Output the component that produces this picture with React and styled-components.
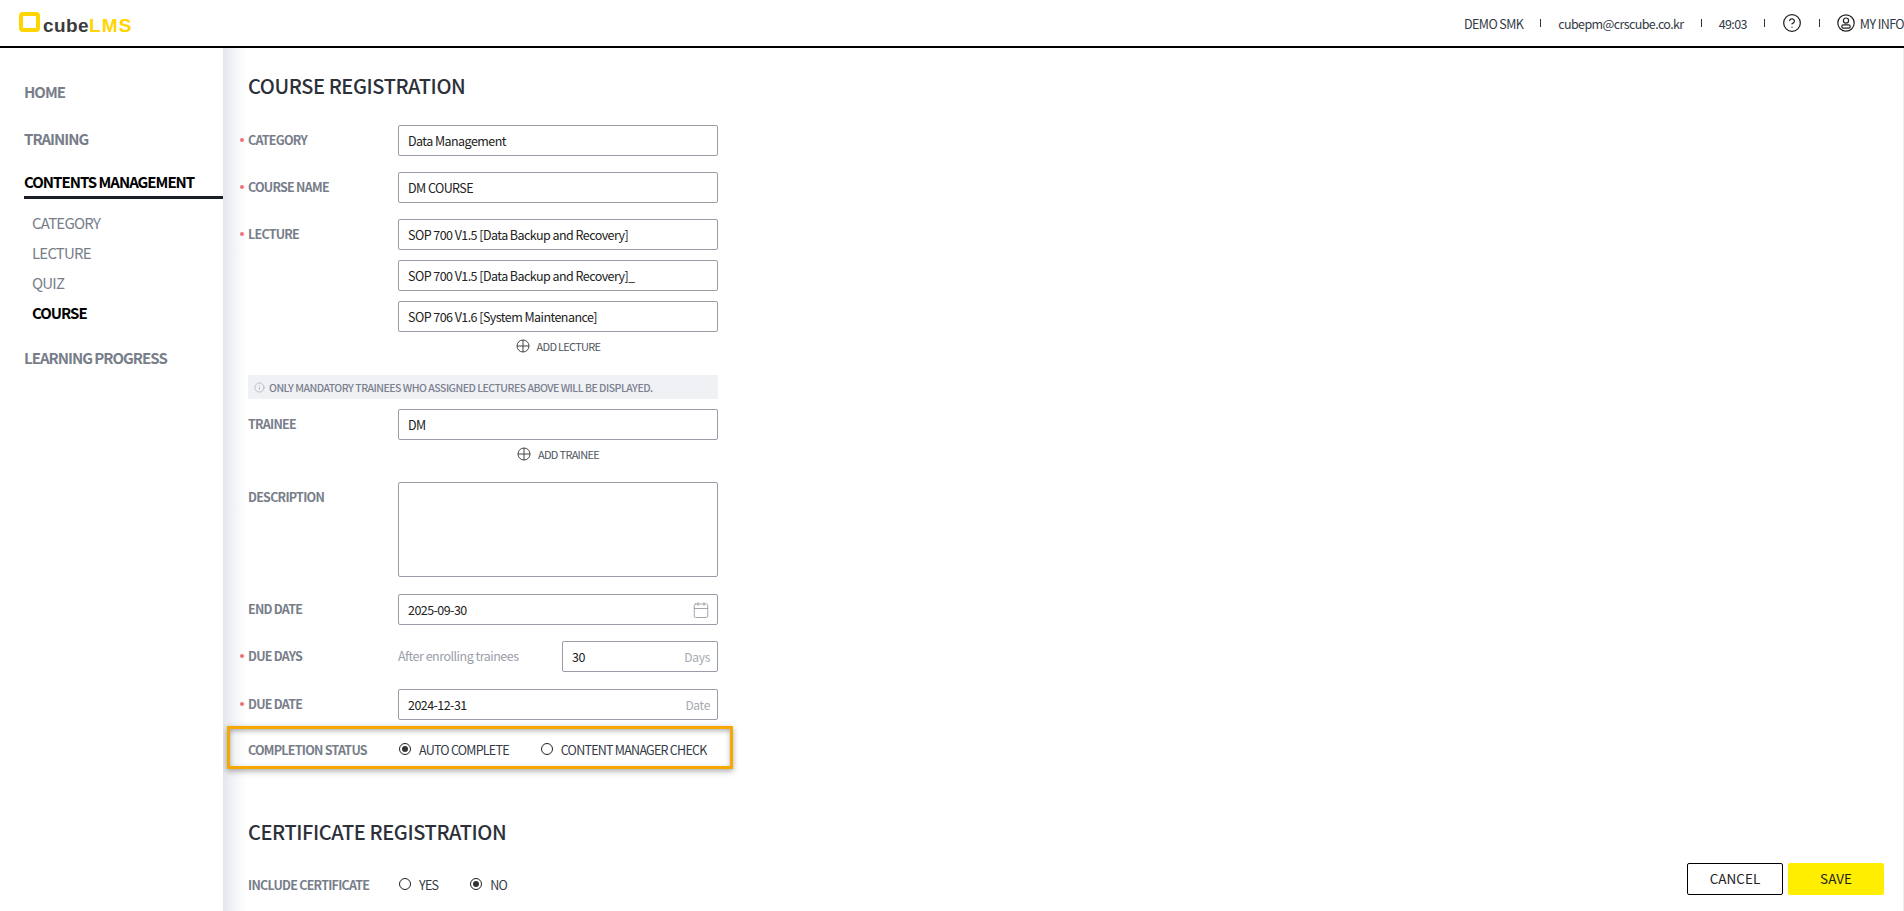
import React from 'react';
import styled, { createGlobalStyle } from 'styled-components';
import { Calendar, CircleHelp, Info } from 'lucide-react';

const GlobalStyle = createGlobalStyle`
   html, body {
      margin: 0;
      height: 100%;
      overflow: hidden;
      background: #fff;
      font-family: "Noto Sans CJK KR", "Noto Sans", sans-serif;
   }
   * {
      box-sizing: border-box;
   }
`;

const Page = styled.div`
   display: flex;
   flex-direction: column;
   height: 911px;
   position: relative;
   overflow: hidden;
`;

/* header */
const Header = styled.header`
   display: flex;
   align-items: center;
   justify-content: space-between;
   flex: none;
   height: 48px;
   padding: 0 0 0 19px;
   border-bottom: 2px solid #000;
`;

const Logo = styled.div`
   display: flex;
   align-items: center;
   font-family: "Liberation Sans", Arial, sans-serif;
   font-weight: 700;
   font-size: 19px;
   line-height: 20px;
`;

const LogoMark = styled.span`
   width: 21px;
   height: 20px;
   margin: -2px 3px 0 0;
   border: 4px solid #ffd500;
   border-radius: 4px;
`;

const LogoCube = styled.span`
   margin-top: 6px;
   color: #3c3c3c;
   letter-spacing: 0.4px;
`;

const LogoLms = styled.span`
   margin-top: 6px;
   color: #ffd500;
   letter-spacing: 1.2px;
`;

const UserBar = styled.div`
   display: flex;
   align-items: center;
   font-size: 12.5px;
   letter-spacing: -0.6px;
   color: #333a45;
   white-space: nowrap;
`;

const UserIconWrap = styled.span`
   display: flex;
   margin-right: 5px;
`;

const Sep = styled.i`
   width: 1px;
   height: 8px;
   margin: 0 17px;
   background: #333;
`;

/* sidebar */
const Body = styled.div`
   display: flex;
   flex: 1;
   min-height: 0;
`;

const Sidebar = styled.nav`
   flex: none;
   width: 223px;
   padding: 32px 0 0 24px;
`;

const NavItem = styled.div`
   height: ${p => p.$h || 47}px;
   font-size: 15px;
   font-weight: 700;
   line-height: 24px;
   letter-spacing: -1px;
   color: #777e8a;
`;

const NavActive = styled.div`
   height: 31px;
   border-bottom: 3px solid #1a1e26;
   font-size: 15px;
   font-weight: 700;
   line-height: 28px;
   letter-spacing: -1px;
   color: #000;
`;

const SubNav = styled.div`
   display: flex;
   flex-direction: column;
   padding: 9px 0 0 8px;
   margin-bottom: 18px;
`;

const SubItem = styled.div`
   height: 30px;
   font-size: 15px;
   font-weight: ${p => (p.$active ? 700 : 400)};
   line-height: 30px;
   letter-spacing: ${p => (p.$active ? -1 : -0.8)}px;
   color: ${p => (p.$active ? '#000' : '#777e8a')};
`;

/* main form */
const Main = styled.main`
   flex: 1;
   padding: 24px 0 0 25px;
   overflow: hidden;
   border-right: 1px solid #eee;
   background: linear-gradient(to right, #e3e6eb, #f6f7f9 14px, #fff 24px);
`;

const Title = styled.h2`
   margin: 0 0 ${p => p.$gap}px;
   font-size: 20px;
   font-weight: 500;
   line-height: 28px;
   letter-spacing: -0.4px;
   color: #2c3038;
`;

const Form = styled.div`
   width: 470px;
`;

const Row = styled.div`
   display: flex;
   position: relative;
   margin-bottom: ${p => p.$gap ?? 16}px;
`;

const Label = styled.div`
   flex: none;
   position: relative;
   width: 150px;
   font-size: 12.5px;
   font-weight: 700;
   line-height: 30px;
   letter-spacing: -0.75px;
   color: #777e8a;

   ${p =>
      p.$required &&
      `&::before {
         content: '';
         position: absolute;
         left: -8px;
         top: 13px;
         width: 4px;
         height: 4px;
         border-radius: 50%;
         background: #f0707a;
      }`}
`;

const Stack = styled.div`
   display: flex;
   flex-direction: column;
   flex: 1;
   gap: ${p => p.$gap ?? 10}px;
   min-width: 0;
`;

const Field = styled.div`
   display: flex;
   align-items: center;
   justify-content: space-between;
   flex: ${p => (p.$w ? 'none' : '1 1 auto')};
   width: ${p => (p.$w ? `${p.$w}px` : 'auto')};
   height: ${p => p.$h || 31}px;
   padding: 0 7px 0 9px;
   border: 1px solid #999da5;
   border-radius: 2px;
   background: #fff;
   font-size: 12.5px;
   letter-spacing: -0.55px;
   color: #222;
`;

const Unit = styled.span`
   font-size: 12px;
   letter-spacing: -0.3px;
   color: #a5a9b1;
`;

const Hint = styled.div`
   flex: 1;
   font-size: 12.5px;
   line-height: 30px;
   letter-spacing: -0.5px;
   color: #9a9ea8;
`;

const AddRow = styled.div`
   display: flex;
   align-items: center;
   justify-content: center;
   gap: 7px;
   height: 27px;
   font-size: 11px;
   letter-spacing: -0.7px;
   color: #4d5361;
`;

const Notice = styled.div`
   display: flex;
   align-items: center;
   gap: 4px;
   height: 24px;
   margin-bottom: 10px;
   padding-left: 6px;
   background: #f0f1f5;
   font-size: 10.5px;
   font-weight: 500;
   letter-spacing: -0.5px;
   color: #7a808e;
   svg {
      color: #a5a9b1;
   }
`;

const Radios = styled.div`
   display: flex;
   flex: 1;
   align-items: center;
   gap: ${p => p.$gap}px;
   height: 28px;
   padding-left: 1px;
`;

const RadioItem = styled.label`
   display: flex;
   align-items: center;
   gap: 8px;
   font-size: 12.5px;
   letter-spacing: -0.75px;
   color: #333a45;
   white-space: nowrap;
`;

const RadioDot = styled.span`
   display: flex;
   align-items: center;
   justify-content: center;
   width: 12px;
   height: 12px;
   border: 1px solid #222;
   border-radius: 50%;
   background: #fff;

   &::after {
      content: '';
      display: ${p => (p.$on ? 'block' : 'none')};
      width: 6px;
      height: 6px;
      border-radius: 50%;
      background: #333;
   }
`;

const Highlight = styled.div`
   position: absolute;
   left: -21px;
   right: -15px;
   top: -9px;
   bottom: -4px;
   border: 3px solid #f7a800;
   box-shadow: 0 2px 6px rgba(0, 0, 0, 0.35), inset 0 2px 5px rgba(0, 0, 0, 0.3);
   pointer-events: none;
`;

const Actions = styled.div`
   display: flex;
   gap: 5px;
   position: absolute;
   right: 20px;
   bottom: 16px;
`;

const Button = styled.button`
   width: 96px;
   height: 32px;
   padding: 0 0 2px;
   border: ${p => (p.$primary ? 'none' : '1.5px solid #000')};
   border-radius: 2px;
   background: ${p => (p.$primary ? '#ffee00' : '#fff')};
   font-family: inherit;
   font-size: 13.5px;
   color: #222;
`;

const PlusIcon = () => (
   <svg width="14" height="14" viewBox="0 0 14 14" fill="none" stroke="#444" strokeWidth="1">
      <circle cx="7" cy="7" r="6" />
      <path d="M7 1v12M1 7h12" />
   </svg>
);

const UserIcon = () => (
   <svg width="18" height="18" viewBox="0 0 18 18" fill="none" stroke="#222" strokeWidth="1.2">
      <circle cx="9" cy="9" r="8.2" />
      <circle cx="9" cy="6.6" r="2.6" />
      <rect x="4.8" y="10.8" width="8.4" height="3.4" rx="1.6" />
   </svg>
);

const Radio = ({ on, children }) => (
   <RadioItem>
      <RadioDot $on={on} />
      {children}
   </RadioItem>
);

const App = () => (
   <Page>
      <GlobalStyle />
      <Header>
         <Logo>
            <LogoMark />
            <LogoCube>cube</LogoCube>
            <LogoLms>LMS</LogoLms>
         </Logo>
         <UserBar>
            <span>DEMO SMK</span>
            <Sep />
            <span>cubepm@crscube.co.kr</span>
            <Sep />
            <span>49:03</span>
            <Sep />
            <CircleHelp size={20} strokeWidth={1.5} color="#222" />
            <Sep />
            <UserIconWrap>
               <UserIcon />
            </UserIconWrap>
            <span>MY INFO</span>
         </UserBar>
      </Header>
      <Body>
         <Sidebar>
            <NavItem>HOME</NavItem>
            <NavItem $h={41}>TRAINING</NavItem>
            <NavActive>CONTENTS MANAGEMENT</NavActive>
            <SubNav>
               <SubItem>CATEGORY</SubItem>
               <SubItem>LECTURE</SubItem>
               <SubItem>QUIZ</SubItem>
               <SubItem $active>COURSE</SubItem>
            </SubNav>
            <NavItem>LEARNING PROGRESS</NavItem>
         </Sidebar>
         <Main>
            <Title $gap={25}>COURSE REGISTRATION</Title>
            <Form>
               <Row>
                  <Label $required>CATEGORY</Label>
                  <Field>Data Management</Field>
               </Row>
               <Row>
                  <Label $required>COURSE NAME</Label>
                  <Field>DM COURSE</Field>
               </Row>
               <Row $gap={16}>
                  <Label $required>LECTURE</Label>
                  <Stack $gap={0}>
                     <Stack>
                        <Field>SOP 700 V1.5 [Data Backup and Recovery]</Field>
                        <Field>SOP 700 V1.5 [Data Backup and Recovery]_</Field>
                        <Field>SOP 706 V1.6 [System Maintenance]</Field>
                     </Stack>
                     <AddRow>
                        <PlusIcon />
                        ADD LECTURE
                     </AddRow>
                  </Stack>
               </Row>
               <Notice>
                  <Info size={11} strokeWidth={1.5} />
                  ONLY MANDATORY TRAINEES WHO ASSIGNED LECTURES ABOVE WILL BE DISPLAYED.
               </Notice>
               <Row $gap={15}>
                  <Label>TRAINEE</Label>
                  <Stack $gap={0}>
                     <Field>DM</Field>
                     <AddRow>
                        <PlusIcon />
                        ADD TRAINEE
                     </AddRow>
                  </Stack>
               </Row>
               <Row $gap={17}>
                  <Label>DESCRIPTION</Label>
                  <Field $h={95} />
               </Row>
               <Row>
                  <Label>END DATE</Label>
                  <Field>
                     2025-09-30
                     <Calendar size={18} strokeWidth={1.3} color="#a0a4ac" />
                  </Field>
               </Row>
               <Row $gap={17}>
                  <Label $required>DUE DAYS</Label>
                  <Hint>After enrolling trainees</Hint>
                  <Field $w={156}>
                     30
                     <Unit>Days</Unit>
                  </Field>
               </Row>
               <Row $gap={15}>
                  <Label $required>DUE DATE</Label>
                  <Field>
                     2024-12-31
                     <Unit>Date</Unit>
                  </Field>
               </Row>
               <Row $gap={53}>
                  <Label>COMPLETION STATUS</Label>
                  <Radios $gap={32}>
                     <Radio on>AUTO COMPLETE</Radio>
                     <Radio>CONTENT MANAGER CHECK</Radio>
                  </Radios>
                  <Highlight />
               </Row>
            </Form>
            <Title $gap={24}>CERTIFICATE REGISTRATION</Title>
            <Form>
               <Row>
                  <Label>INCLUDE CERTIFICATE</Label>
                  <Radios $gap={32}>
                     <Radio>YES</Radio>
                     <Radio on>NO</Radio>
                  </Radios>
               </Row>
            </Form>
         </Main>
      </Body>
      <Actions>
         <Button>CANCEL</Button>
         <Button $primary>SAVE</Button>
      </Actions>
   </Page>
);

export default App;
